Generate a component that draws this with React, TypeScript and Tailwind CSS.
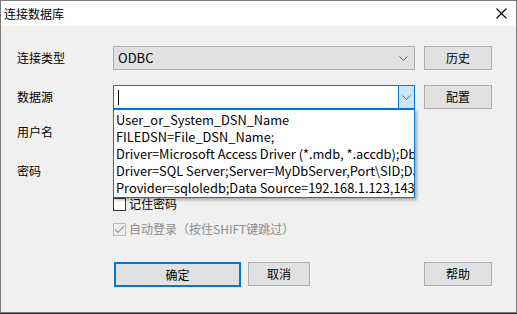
import React from "react";

const cjk = { fontFamily: '"Noto Sans CJK SC", "Noto Sans", sans-serif' };

function Chevron() {
  return (
    <svg width="9" height="5" viewBox="0 0 9 5" className="block">
      <path d="M0.5 0.5 L4.5 4.5 L8.5 0.5" fill="none" stroke="#606060" strokeWidth="1" />
    </svg>
  );
}

function Btn({ children, focus = false, w }: { children: React.ReactNode; focus?: boolean; w: string }) {
  return (
    <div
      className={`${w} h-[24px] flex items-center justify-center bg-[#e1e1e1] text-[12px] text-black ${
        focus ? "border-2 border-[#0078d7]" : "border border-[#adadad]"
      }`}
    >
      {children}
    </div>
  );
}

export default function App() {
  const items = [
    "User_or_System_DSN_Name",
    "FILEDSN=File_DSN_Name;",
    "Driver=Microsoft Access Driver (*.mdb, *.accdb);Dbq=C:\\mydatabase.accdb;",
    "Driver=SQL Server;Server=MyDbServer,Port\\SID;Database=MyDb;",
    "Provider=sqloledb;Data Source=192.168.1.123,1433;",
  ];
  return (
    <div className="w-[517px] h-[314px] bg-[#2e2e2e] relative overflow-hidden" style={cjk}>
      <div className="w-[517px] h-[313px] border border-[#7a7a7a] bg-[#f0f0f0] flex flex-col">
        <div className="h-[25px] bg-white flex items-center justify-between pl-[3px] pr-[9px]">
          <span className="text-[12px] text-black leading-none">连接数据库</span>
          <svg width="11" height="11" viewBox="0 0 11 11">
            <path d="M0.5 0.5 L10.5 10.5 M10.5 0.5 L0.5 10.5" stroke="#000" strokeWidth="1.1" />
          </svg>
        </div>
        <div className="flex flex-col pl-[16px] text-[12px] text-black">
          {/* row 1 */}
          <div className="flex items-center mt-[20px] h-[24px]">
            <div className="w-[96px]">连接类型</div>
            <div className="w-[302px] h-[24px] border border-[#adadad] bg-[#e1e1e1] flex items-center justify-between pl-[4px] pr-[6px]">
              <span className="text-[13px]">ODBC</span>
              <Chevron />
            </div>
            <div className="ml-[9px]">
              <Btn w="w-[68px]">历史</Btn>
            </div>
          </div>
          {/* row 2 */}
          <div className="flex items-center mt-[15px] h-[24px]">
            <div className="w-[96px]">数据源</div>
            <div className="w-[302px] h-[24px] border border-[#0078d7] bg-white flex items-stretch">
              <div className="flex-1 flex items-center pl-[4px]">
                <div className="w-[1px] h-[15px] bg-black" />
              </div>
              <div className="w-[16px] bg-[#cce4f7] border-l border-[#0078d7] flex items-center justify-center">
                <Chevron />
              </div>
            </div>
            <div className="ml-[9px]">
              <Btn w="w-[68px]">配置</Btn>
            </div>
          </div>
          {/* row 3 */}
          <div className="flex items-center mt-[11px] h-[24px]">
            <div className="w-[96px]">用户名</div>
          </div>
          {/* row 4 */}
          <div className="flex items-center mt-[15px] h-[24px]">
            <div className="w-[96px]">密码</div>
          </div>
          {/* remember */}
          <div className="flex items-center mt-[14px] ml-[96px] h-[14px]">
            <div className="w-[13px] h-[13px] border border-[#333] bg-white" />
            <span className="ml-[3px]">记住密码</span>
          </div>
          {/* auto login */}
          <div className="flex items-center mt-[11px] ml-[96px] h-[14px] text-[#8d8d8d]">
            <div className="w-[13px] h-[13px] border border-[#bcbcbc] bg-[#f0f0f0] flex items-center justify-center">
              <svg width="11" height="9" viewBox="0 0 11 9">
                <path d="M1 4.5 L4 7.5 L10 1" fill="none" stroke="#a0a0a0" strokeWidth="1.2" />
              </svg>
            </div>
            <span className="ml-[3px]">自动登录（按住SHIFT键跳过）</span>
          </div>
          {/* buttons */}
          <div className="flex items-start mt-[26px] h-[25px]">
            <div className="ml-[97px]">
              <Btn w="w-[127px] h-[25px]" focus>
                确定
              </Btn>
            </div>
            <div className="ml-[7px]">
              <Btn w="w-[62px]">取消</Btn>
            </div>
            <div className="ml-[114px]">
              <Btn w="w-[68px]">帮助</Btn>
            </div>
          </div>
        </div>
      </div>
      {/* dropdown list */}
      <div className="absolute left-[113px] top-[109px] w-[302px] h-[89px] bg-white border border-[#0078d7] shadow-[2px_2px_3px_rgba(0,0,0,0.3)] overflow-hidden pt-[1px]">
        {items.map((t) => (
          <div key={t} className="h-[17px] leading-[17px] pl-[2px] text-[12.8px] text-black whitespace-nowrap">
            {t}
          </div>
        ))}
      </div>
    </div>
  );
}
